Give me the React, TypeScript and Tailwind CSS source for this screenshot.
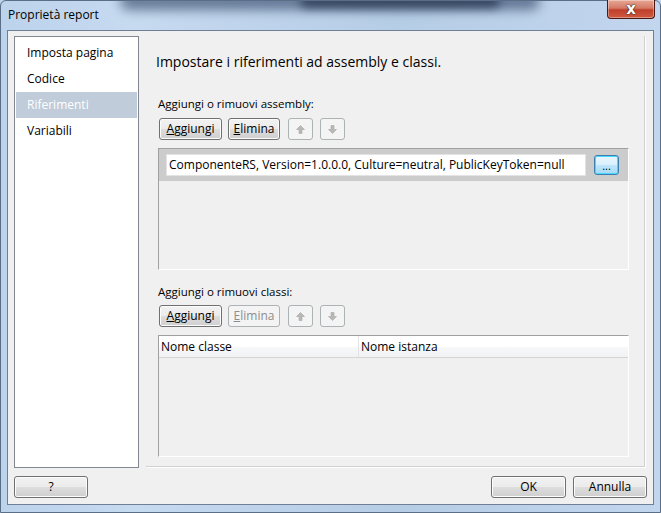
import React from "react";

const font = { fontFamily: '"Segoe UI", "Open Sans", "Noto Sans", sans-serif' };

function Btn({ children, w, disabled, className = "" }: { children: React.ReactNode; w: string; disabled?: boolean; className?: string }) {
  if (disabled) {
    return (
      <div className={`${w} h-[22px] rounded-[3px] border border-[#adb2b5] bg-[#f4f4f4] flex items-center justify-center text-[12px] text-[#8d8d8d] ${className}`}>
        {children}
      </div>
    );
  }
  return (
    <div className={`${w} h-[22px] rounded-[3px] border border-[#707070] bg-[linear-gradient(#f2f2f2_0%,#ebebeb_50%,#dddddd_51%,#cfcfcf_100%)] shadow-[inset_0_0_0_1px_#fcfcfc] flex items-center justify-center text-[12px] text-black ${className}`}>
      {children}
    </div>
  );
}

function Arrow({ up }: { up?: boolean }) {
  return (
    <div className="w-[25px] h-[22px] rounded-[3px] border border-[#adb2b5] bg-[#f4f4f4] flex items-center justify-center">
      <svg width="9" height="9" viewBox="0 0 9 9" style={{ transform: up ? undefined : "rotate(180deg)" }}>
        <path d="M4.5 0.5 L8.5 4.5 L6 4.5 L6 8.5 L3 8.5 L3 4.5 L0.5 4.5 Z" fill="#b8b8b8" stroke="#a8a8a8" strokeWidth="0.6" />
      </svg>
    </div>
  );
}

function ButtonRow({ elimDisabled }: { elimDisabled?: boolean }) {
  return (
    <div className="flex items-center gap-[6px] ml-[1px]">
      <Btn w="w-[63px]"><span><u>A</u>ggiungi</span></Btn>
      <Btn w="w-[52px]" disabled={elimDisabled}><span><u>E</u>limina</span></Btn>
      <div className="flex gap-[7px] ml-[2px]">
        <Arrow up />
        <Arrow />
      </div>
    </div>
  );
}

export default function App() {
  return (
    <div className="w-[661px] h-[513px] relative overflow-hidden bg-[linear-gradient(90deg,#bcd3ec_0%,#c6daf0_20%,#b6cde6_60%,#c2d6ee_100%)] flex flex-col" style={font}>
      {/* glass streak */}
      <div className="absolute left-[120px] top-[-8px] w-[420px] h-[18px] rounded-full bg-[#3b4f6e] opacity-70 blur-[6px]" />
      <div className="absolute left-[300px] top-[-6px] w-[200px] h-[14px] rounded-full bg-[#1f2e48] opacity-70 blur-[5px]" />
      <div className="absolute inset-0 border border-[#5a6e88] rounded-t-[6px] pointer-events-none" />
      {/* title bar */}
      <div className="h-[30px] flex items-center pl-[8px] relative">
        <span className="text-[12px] text-black">Proprietà report</span>
      </div>
      <div className="absolute top-0 right-[6px] w-[48px] h-[19px] rounded-b-[4px] border border-[#4a1a12] border-t-0 bg-[linear-gradient(#e8a895_0%,#d47a66_45%,#c0402b_55%,#cf5a40_100%)] flex items-center justify-center shadow-[inset_0_0_0_1px_rgba(255,255,255,0.35)]">
        <span className="text-[15px] font-bold text-white leading-none" style={{ fontFamily: '"DejaVu Sans", sans-serif', textShadow: "0 0 2px #333, 0 0 1px #000" }}>x</span>
      </div>
      {/* client area */}
      <div className="mx-[7px] h-[475px] border border-[#6f8096] bg-[#f0f0f0] flex flex-col relative">
        <div className="flex pt-[5px] pl-[6px]">
          {/* nav */}
          <div className="w-[125px] h-[432px] border border-[#828790] bg-white pt-[3px] text-[12px]">
            <div className="h-[26px] flex items-center pl-[12px] text-black">Imposta pagina</div>
            <div className="h-[26px] flex items-center pl-[12px] text-black">Codice</div>
            <div className="h-[26px] flex items-center pl-[11px] mx-[1px] bg-[#c0ccd9] text-white">Riferimenti</div>
            <div className="h-[26px] flex items-center pl-[12px] text-black">Variabili</div>
          </div>
          {/* right panel */}
          <div className="ml-[7px] w-[499px] h-[431px] border-r border-b border-[#d0d0d0] shadow-[1px_1px_0_#ffffff] pl-[12px] flex flex-col">
            <div className="mt-[16px] ml-[-2px] h-[20px] leading-[20px] text-[14px] text-black">Impostare i riferimenti ad assembly e classi.</div>
            <div className="mt-[24px] h-[16px] leading-[16px] text-[11.5px] text-black">Aggiungi o rimuovi assembly:</div>
            <div className="mt-[6px]"><ButtonRow /></div>
            {/* assembly list */}
            <div className="mt-[8px] w-[471px] h-[122px] border border-t-[#a0a0a0] border-l-[#a0a0a0] border-r-white border-b-white bg-[#f0f0f0] flex flex-col">
              <div className="h-[32px] bg-[#cccccc] flex items-center pl-[7px]">
                <div className="w-[420px] h-[22px] bg-white border border-[#e3e3e3] flex items-center pl-[2px] text-[12px] text-black whitespace-nowrap overflow-hidden">
                  ComponenteRS, Version=1.0.0.0, Culture=neutral, PublicKeyToken=null
                </div>
                <div className="ml-[8px] w-[25px] h-[20px] rounded-[3px] border border-[#3c7fb1] shadow-[inset_0_0_0_1px_#48d8fb] bg-[linear-gradient(#eaf6fd_0%,#d9f0fc_50%,#bee6fd_51%,#a7d9f5_100%)] flex items-end justify-center pb-[3px] text-[11px] leading-none text-black">
                  ...
                </div>
              </div>
            </div>
            <div className="mt-[14px] h-[16px] leading-[16px] text-[11.5px] text-black">Aggiungi o rimuovi classi:</div>
            <div className="mt-[5px]"><ButtonRow elimDisabled /></div>
            {/* class table */}
            <div className="mt-[8px] w-[471px] h-[122px] border border-t-[#a0a0a0] border-l-[#a0a0a0] border-r-white border-b-white bg-[#f0f0f0] flex flex-col">
              <div className="h-[22px] flex bg-[linear-gradient(#ffffff_0%,#ffffff_50%,#f7f8fa_51%,#f1f2f4_100%)] border-b border-[#d5d5d5] text-[12px] text-black">
                <div className="w-[200px] border-r border-[#e3e3e3] flex items-center pl-[2px]">Nome classe</div>
                <div className="flex-1 flex items-center pl-[2px]">Nome istanza</div>
              </div>
            </div>
          </div>
        </div>
        {/* bottom buttons */}
        <div className="flex mt-[8px] px-[6px]">
          <Btn w="w-[74px]"><span>?</span></Btn>
          <div className="flex-1" />
          <Btn w="w-[75px]"><span>OK</span></Btn>
          <Btn w="w-[74px]" className="ml-[7px]"><span>Annulla</span></Btn>
        </div>
      </div>
    </div>
  );
}
